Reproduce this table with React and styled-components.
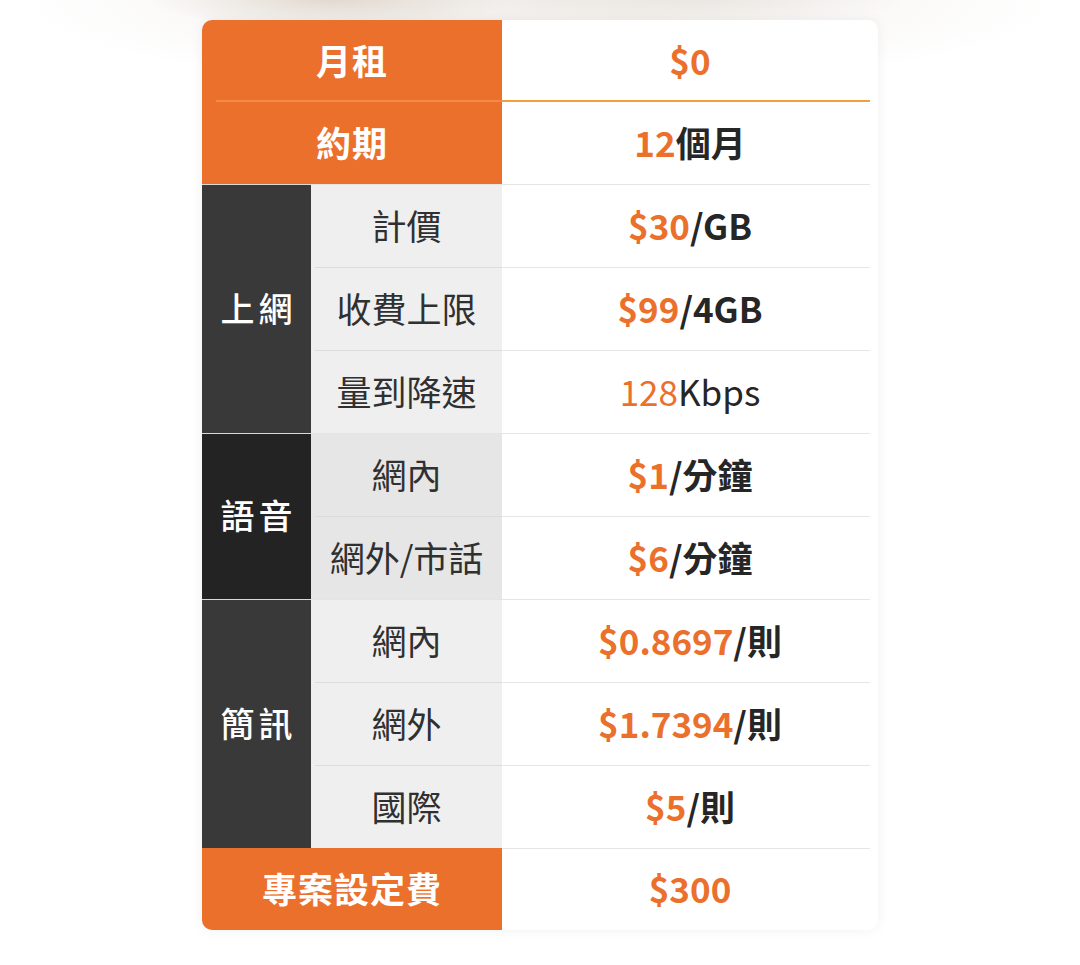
import React from 'react'
import styled, { createGlobalStyle } from 'styled-components'

const GlobalStyle = createGlobalStyle`
  html, body {
    margin: 0;
    padding: 0;
    background: #fff;
  }
  body {
    font-family: "Noto Sans CJK TC", "Noto Sans", sans-serif;
  }
`

const orange = '#eb702c'
const dark = '#262626'

const Page = styled.main`
  min-height: 965px;
  padding-top: 20px;
  box-sizing: border-box;
  background:
    radial-gradient(ellipse 260px 40px at 330px 0, rgba(200, 185, 168, 0.45), transparent 70%),
    radial-gradient(ellipse 300px 34px at 700px 0, rgba(210, 200, 190, 0.3), transparent 70%),
    radial-gradient(ellipse 700px 120px at 540px 0, rgba(240, 236, 232, 0.9), transparent 75%),
    #fff;
`

const Card = styled.section`
  width: 676px;
  margin: 0 auto;
  display: grid;
  grid-template-columns: 109px 191px 376px;
  grid-template-rows: 81px repeat(9, 83px) 82px;
  background: #fff;
  border-radius: 10px;
  overflow: hidden;
  box-shadow: 0 0 14px rgba(0, 0, 0, 0.06);
`

const Cell = styled.div`
  position: relative;
  display: flex;
  align-items: center;
  justify-content: center;
  font-size: 35px;
  line-height: 1;
  padding-bottom: 3px;
`

const Head = styled(Cell)`
  grid-column: span 2;
  background: ${orange};
  color: #fff;
  font-weight: 700;
  letter-spacing: 1px;
`

const PeriodHead = styled(Head)`
  &::before {
    content: '';
    position: absolute;
    top: -1px;
    left: 14px;
    right: 0;
    height: 2px;
    background: #f58a48;
  }
`

const Category = styled(Cell)`
  grid-row: span ${({ $span }) => $span};
  background: ${({ $deep }) => ($deep ? '#232323' : '#393939')};
  color: #fff;
  font-size: 34px;
  font-weight: 500;
  letter-spacing: 4px;
  padding-left: 4px;
  border-top: 1px solid #d9d9d9;
`

const Sub = styled(Cell)`
  background: ${({ $deep }) => ($deep ? '#e6e6e6' : '#efefef')};
  color: #303030;
  font-weight: 400;
  ${({ $line }) => $line && `
    &::before {
      content: '';
      position: absolute;
      top: 0;
      left: 4px;
      right: 0;
      height: 1px;
      background: #dcdcdc;
    }
  `}
  ${({ $first }) => $first && `border-top: 1px solid #e4e4e4;`}
`

const Value = styled(Cell)`
  color: ${dark};
  font-weight: ${({ $light }) => ($light ? 400 : 700)};
  &::before {
    content: '';
    position: absolute;
    top: 0;
    left: 0;
    right: 8px;
    height: 1px;
    background: #e6e6e6;
    display: ${({ $first }) => ($first ? 'none' : 'block')};
  }
`

const PeriodValue = styled(Value)`
  &::before {
    top: -1px;
    height: 2px;
    background: #f0a040;
  }
`

const Hi = styled.span`
  color: ${orange};
`

const rows = [
  { cat: '上網', span: 3, items: [
    ['計價', <><Hi>$30</Hi>/GB</>],
    ['收費上限', <><Hi>$99</Hi>/4GB</>],
    ['量到降速', <><Hi>128</Hi>Kbps</>, true],
  ] },
  { cat: '語音', span: 2, deep: true, items: [
    ['網內', <><Hi>$1</Hi>/分鐘</>],
    ['網外/市話', <><Hi>$6</Hi>/分鐘</>],
  ] },
  { cat: '簡訊', span: 3, items: [
    ['網內', <><Hi>$0.8697</Hi>/則</>],
    ['網外', <><Hi>$1.7394</Hi>/則</>],
    ['國際', <><Hi>$5</Hi>/則</>],
  ] },
]

const App = () => (
  <Page>
    <GlobalStyle />
    <Card>
      <Head>月租</Head>
      <Value $first><Hi>$0</Hi></Value>
      <PeriodHead>約期</PeriodHead>
      <PeriodValue><Hi>12</Hi>個月</PeriodValue>
      {rows.map((group) => (
        <React.Fragment key={group.cat}>
          {group.items.map(([label, value, light], i) => (
            <React.Fragment key={label}>
              {i === 0 && (
                <Category $span={group.span} $deep={group.deep}>{group.cat}</Category>
              )}
              <Sub $deep={group.deep} $line={i > 0} $first={i === 0}>{label}</Sub>
              <Value $light={light}>{value}</Value>
            </React.Fragment>
          ))}
        </React.Fragment>
      ))}
      <Head>專案設定費</Head>
      <Value><Hi>$300</Hi></Value>
    </Card>
  </Page>
)

export default App
